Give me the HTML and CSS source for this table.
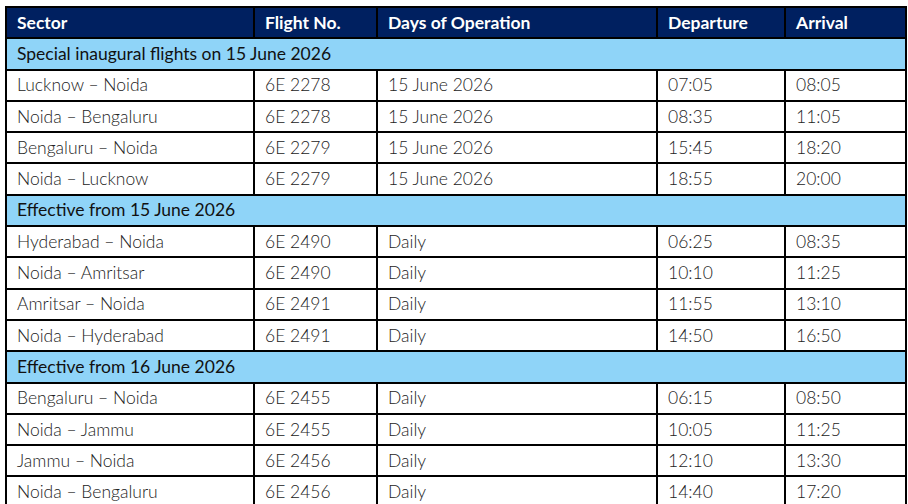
FILE: index.html
```html
<!DOCTYPE html>
<html>
<head>
<meta charset="utf-8">
<link rel="stylesheet" href="styles.css">
</head>
<body>
<p class="lead">The inaugural flights, and the schedule of flights operated by IndiGo from Noida (NIA), are given below:</p>
<table class="sched">
  <colgroup>
    <col class="c1"><col class="c2"><col class="c3"><col class="c4"><col class="c5">
  </colgroup>
  <thead>
    <tr class="head"><th>Sector</th><th>Flight No.</th><th>Days of Operation</th><th>Departure</th><th>Arrival</th></tr>
  </thead>
  <tbody>
    <tr class="sec"><td colspan="5">Special inaugural flights on 15 June 2026</td></tr>
    <tr><td>Lucknow – Noida</td><td>6E 2278</td><td>15 June 2026</td><td>07:05</td><td>08:05</td></tr>
    <tr><td>Noida – Bengaluru</td><td>6E 2278</td><td>15 June 2026</td><td>08:35</td><td>11:05</td></tr>
    <tr><td>Bengaluru – Noida</td><td>6E 2279</td><td>15 June 2026</td><td>15:45</td><td>18:20</td></tr>
    <tr><td>Noida – Lucknow</td><td>6E 2279</td><td>15 June 2026</td><td>18:55</td><td>20:00</td></tr>
    <tr class="sec"><td colspan="5">Effective from 15 June 2026</td></tr>
    <tr><td>Hyderabad – Noida</td><td>6E 2490</td><td>Daily</td><td>06:25</td><td>08:35</td></tr>
    <tr><td>Noida – Amritsar</td><td>6E 2490</td><td>Daily</td><td>10:10</td><td>11:25</td></tr>
    <tr><td>Amritsar – Noida</td><td>6E 2491</td><td>Daily</td><td>11:55</td><td>13:10</td></tr>
    <tr><td>Noida – Hyderabad</td><td>6E 2491</td><td>Daily</td><td>14:50</td><td>16:50</td></tr>
    <tr class="sec"><td colspan="5">Effective from 16 June 2026</td></tr>
    <tr><td>Bengaluru – Noida</td><td>6E 2455</td><td>Daily</td><td>06:15</td><td>08:50</td></tr>
    <tr><td>Noida – Jammu</td><td>6E 2455</td><td>Daily</td><td>10:05</td><td>11:25</td></tr>
    <tr><td>Jammu – Noida</td><td>6E 2456</td><td>Daily</td><td>12:10</td><td>13:30</td></tr>
    <tr><td>Noida – Bengaluru</td><td>6E 2456</td><td>Daily</td><td>14:40</td><td>17:20</td></tr>
  </tbody>
</table>
</body>
</html>
```
FILE: styles.css
```css
html, body {
  margin: 0;
  padding: 0;
  background: #ffffff;
}
body {
  font-family: Lato, "Open Sans", "Liberation Sans", sans-serif;
  overflow: hidden;
  height: 504px;
}
.lead {
  margin: -19px 0 0 0;
  padding-left: 8px;
  font-size: 17.5px;
  line-height: 20px;
  height: 20px;
  color: #222222;
  font-weight: 300;
  white-space: nowrap;
}
.sched {
  border-collapse: collapse;
  margin: 5px 0 0 5px;
  width: 900px;
  table-layout: fixed;
}
.c1 { width: 248px; }
.c2 { width: 123px; }
.c3 { width: 280px; }
.c4 { width: 128px; }
.c5 { width: 121px; }
.sched th, .sched td {
  border: 2px solid #000000;
  height: 29.3px;
  padding: 0 0 0 10px;
  text-align: left;
  font-size: 17.5px;
  line-height: 20px;
  white-space: nowrap;
}
.head th {
  background: #002060;
  color: #ffffff;
  font-weight: 700;
}
.sched td {
  color: #222222;
  font-weight: 300;
}
.sec td {
  background: #8fd4f8;
  color: #111111;
  font-weight: 400;
}
```
